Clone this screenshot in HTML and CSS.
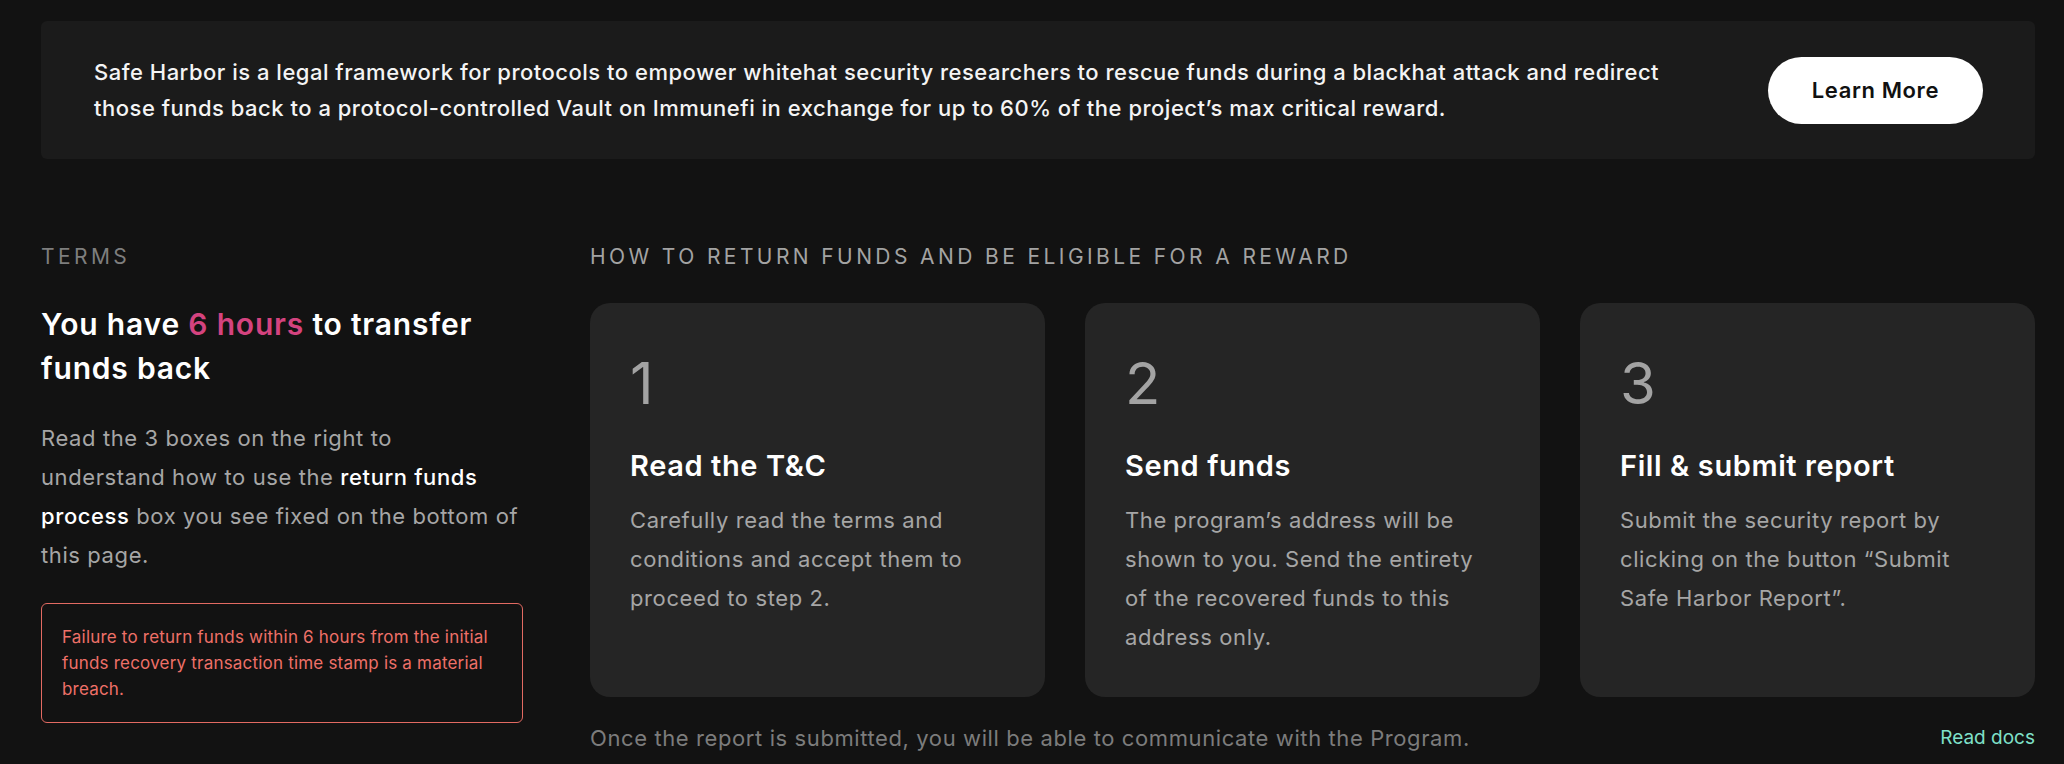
FILE: index.html
```html
<!DOCTYPE html>
<html lang="en">
<head>
    <meta charset="UTF-8">
    <meta name="viewport" content="width=device-width, initial-scale=1.0">
    <title>Safe Harbor</title>
    <link rel="stylesheet" href="styles.css">
</head>
<body>
    <div class="page">
        <div class="banner">
            <p class="banner-text">Safe Harbor is a legal framework for protocols to empower whitehat security researchers to rescue funds during a blackhat attack and redirect those funds back to a protocol-controlled Vault on Immunefi in exchange for up to 60% of the project’s max critical reward.</p>
            <button class="learn-button">Learn More</button>
        </div>

        <div class="content">
            <div class="terms">
                <div class="label">Terms</div>
                <h2 class="terms-title">You have <span class="highlight">6 hours</span> to transfer funds back</h2>
                <p class="terms-text">Read the 3 boxes on the right to understand how to use the <strong>return funds process</strong> box you see fixed on the bottom of this page.</p>
                <div class="warning">Failure to return funds within 6 hours from the initial funds recovery transaction time stamp is a material breach.</div>
            </div>

            <div class="steps">
                <div class="label label-light">How to return funds and be eligible for a reward</div>
                <div class="step-list">
                    <div class="step-card">
                        <div class="step-number">1</div>
                        <h3 class="step-title">Read the T&amp;C</h3>
                        <p class="step-text">Carefully read the terms and conditions and accept them to proceed to step 2.</p>
                    </div>
                    <div class="step-card">
                        <div class="step-number">2</div>
                        <h3 class="step-title">Send funds</h3>
                        <p class="step-text">The program’s address will be shown to you. Send the entirety of the recovered funds to this address only.</p>
                    </div>
                    <div class="step-card">
                        <div class="step-number">3</div>
                        <h3 class="step-title">Fill &amp; submit report</h3>
                        <p class="step-text">Submit the security report by clicking on the button “Submit Safe Harbor Report”.</p>
                    </div>
                </div>
                <div class="steps-footer">
                    <span>Once the report is submitted, you will be able to communicate with the Program.</span>
                    <a href="#" class="docs-link">Read docs</a>
                </div>
            </div>
        </div>
    </div>
</body>
</html>
```

FILE: styles.css
```css
body {
    margin: 0;
    background: #121212;
    font-family: Inter, "Noto Sans", sans-serif;
    color: #fff;
}
.page {
    padding: 21px 29px 0 41px;
}
.banner {
    display: flex;
    align-items: center;
    gap: 60px;
    background: #1b1b1b;
    border-radius: 6px;
    padding: 33px 52px 33px 53px;
}
.banner-text {
    flex: 1;
    margin: 0;
    font-size: 22px;
    line-height: 36px;
    font-weight: 500;
    letter-spacing: 0.5px;
    color: #f4f4f4;
}
.learn-button {
    background: #fff;
    color: #111;
    border: none;
    border-radius: 34px;
    height: 67px;
    padding: 0 44px;
    font-family: inherit;
    font-size: 22px;
    font-weight: 600;
    letter-spacing: 0.6px;
    white-space: nowrap;
}
.content {
    display: grid;
    grid-template-columns: 482px 1fr;
    gap: 67px;
    margin-top: 84px;
}
.label {
    font-size: 21px;
    line-height: 28px;
    letter-spacing: 3.4px;
    text-transform: uppercase;
    color: #7e7e7e;
}
.label-light {
    color: #a3a3a3;
}
.terms-title {
    margin: 31px 0 0;
    font-size: 30px;
    line-height: 44px;
    font-weight: 600;
    letter-spacing: 0.8px;
}
.highlight {
    color: #d4437f;
}
.terms-text {
    margin: 29px 0 0;
    font-size: 22px;
    line-height: 39px;
    letter-spacing: 0.6px;
    color: #a6a6a6;
}
.terms-text strong {
    color: #fff;
    font-weight: 500;
}
.warning {
    margin-top: 28px;
    border: 1px solid #e26a62;
    border-radius: 6px;
    padding: 20px;
    font-size: 17px;
    line-height: 26px;
    letter-spacing: 0.2px;
    color: #ee7068;
}
.step-list {
    display: grid;
    grid-template-columns: repeat(3, 1fr);
    gap: 40px;
    margin-top: 32px;
}
.step-card {
    background: #252525;
    border-radius: 20px;
    padding: 44px 40px 40px;
}
.step-number {
    font-size: 58px;
    line-height: 72px;
    color: #a3a3a3;
}
.step-title {
    margin: 29px 0 0;
    font-size: 29px;
    line-height: 36px;
    font-weight: 600;
    letter-spacing: 0.6px;
}
.step-text {
    margin: 17px 0 0;
    font-size: 22px;
    line-height: 39px;
    letter-spacing: 0.6px;
    color: #a6a6a6;
}
.steps-footer {
    display: flex;
    justify-content: space-between;
    align-items: center;
    margin-top: 26px;
    font-size: 22px;
    line-height: 30px;
    letter-spacing: 0.6px;
    color: #7c7c7c;
}
.docs-link {
    font-size: 19px;
    letter-spacing: 0;
    color: #7fe0c9;
    text-decoration: none;
}
```
